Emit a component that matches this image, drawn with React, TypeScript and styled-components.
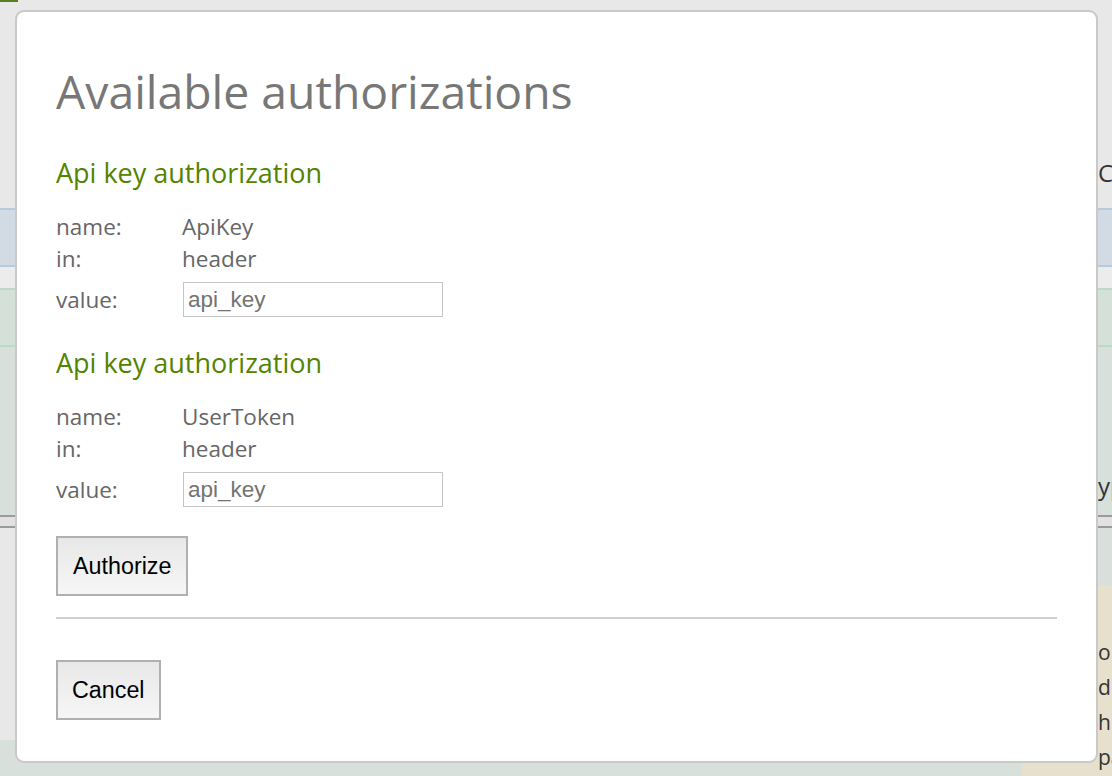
import styled, { createGlobalStyle } from 'styled-components';

const GlobalStyle = createGlobalStyle`
	html, body {
		margin: 0;
		padding: 0;
		width: 1112px;
		height: 776px;
		overflow: hidden;
		background: #e8e8e8;
	}
	* {
		box-sizing: border-box;
	}
`;

const Page = styled.div`
	position: relative;
	width: 1112px;
	height: 776px;
	display: flex;
	flex-direction: column;
	font-family: 'Open Sans', 'Noto Sans', sans-serif;
	color: #333;
	overflow: hidden;
`;

const TopBar = styled.div`
	height: 208px;
	background: #e8e8e8;
	position: relative;
	display: flex;
	justify-content: flex-end;
	align-items: flex-end;
	padding: 0 0 20px 0;
	&::before {
		content: '';
		position: absolute;
		left: 0;
		top: 0;
		width: 18px;
		height: 2px;
		background: #5a7f1e;
	}
`;

const Band = styled.div<{ $h: number; $bg: string; $line?: string }>`
	height: ${p => p.$h}px;
	background: ${p => p.$bg};
	border-top: ${p => (p.$line ? `2px solid ${p.$line}` : 'none')};
	border-bottom: ${p => (p.$line ? `2px solid ${p.$line}` : 'none')};
	display: flex;
	flex-direction: column;
	align-items: flex-end;
	justify-content: flex-end;
`;

const EdgeText = styled.span<{ $below?: number }>`
	font-size: 24px;
	line-height: 30px;
	color: #333;
	width: 14px;
	margin-bottom: ${p => p.$below ?? 0}px;
	overflow: hidden;
	white-space: nowrap;
`;

const BottomRow = styled.div`
	flex: 1;
	display: flex;
`;

const BottomLeft = styled.div`
	flex: 1;
	display: flex;
	flex-direction: column;
`;

const BottomRight = styled.div`
	width: 90px;
	display: flex;
	flex-direction: column;
`;

const DocText = styled.div`
	flex: 1;
	background: #e6e0cc;
	padding: 50px 0 0 76px;
	font-size: 21px;
	line-height: 35px;
	color: #333;
	white-space: nowrap;
	overflow: hidden;
`;

const Modal = styled.div`
	position: absolute;
	left: 15px;
	top: 10px;
	width: 1083px;
	height: 753px;
	background: #ffffff;
	border: 2px solid #c9c9c9;
	border-radius: 9px;
	padding: 50px 39px 0 39px;
	font-family: 'Open Sans', 'Noto Sans', sans-serif;
`;

const Title = styled.h3`
	margin: 0 0 34px 0;
	font-size: 46.3px;
	line-height: 60px;
	font-weight: 400;
	color: #777777;
`;

const AuthHeading = styled.h4`
	margin: 0 0 21px 0;
	font-size: 27px;
	line-height: 34px;
	font-weight: 400;
	color: #548300;
`;

const Section = styled.div`
	margin-bottom: 29px;
`;

const Fields = styled.div`
	display: grid;
	grid-template-columns: 126px 1fr;
	align-items: center;
	font-size: 22.5px;
	line-height: 32px;
	color: #666666;
`;

const ValueCell = styled.div`
	margin-top: 7px;
	display: flex;
`;

const LabelCell = styled.div<{ $input?: boolean }>`
	margin-top: ${p => (p.$input ? '7px' : '0')};
`;

const KeyInput = styled.input`
	width: 260px;
	height: 35px;
	margin: 0 0 0 1px;
	border: 1px solid #c4c4c4;
	padding: 0 4px;
	font-family: 'Liberation Sans', Arial, sans-serif;
	font-size: 22.5px;
	color: #666;
	outline: none;
	&::placeholder {
		color: #737373;
	}
`;

const Button = styled.button`
	display: block;
	height: 60px;
	margin: 0;
	padding: 0 15px;
	border: 2px solid #b0b0b0;
	border-radius: 0;
	background: linear-gradient(#e8e8e8, #f6f6f6);
	font-family: 'Liberation Sans', Arial, sans-serif;
	font-size: 23.3px;
	color: #000;
`;

const AuthorizeButton = styled(Button)`
	margin-top: 9px;
`;

const CancelButton = styled(Button)`
	padding: 0 14px;
`;

const Divider = styled.hr`
	margin: 21px 0 41px 0;
	border: none;
	border-top: 2px solid #d0d0d0;
`;

const auths = [
	{ name: 'ApiKey', in: 'header' },
	{ name: 'UserToken', in: 'header' },
];

export default function App() {
	return (
		<>
			<GlobalStyle />
			<Page>
				<TopBar>
					<EdgeText>C</EdgeText>
				</TopBar>
				<Band $h={59} $bg='#d2dbe4' $line='#b8cbdc' />
				<Band $h={21} $bg='#ececec' />
				<Band $h={59} $bg='#d5e0d9' $line='#bcd8cb' />
				<Band $h={168} $bg='#d7e0db'>
					<EdgeText $below={14}>yp</EdgeText>
				</Band>
				<Band $h={13} $bg='#e2e2e2' $line='#9a9a9a' />
				<BottomRow>
					<BottomLeft>
						<Band $h={212} $bg='#e8e8e8' />
						<Band $h={36} $bg='#d8e0dc' />
					</BottomLeft>
					<BottomRight>
						<Band $h={57} $bg='#d9e0dc' />
						<DocText>
							o<br />d<br />h<br />pa
						</DocText>
					</BottomRight>
				</BottomRow>

				<Modal>
					<Title>Available authorizations</Title>
					{auths.map(a => (
						<Section key={a.name}>
							<AuthHeading>Api key authorization</AuthHeading>
							<Fields>
								<LabelCell>name:</LabelCell>
								<div>{a.name}</div>
								<LabelCell>in:</LabelCell>
								<div>{a.in}</div>
								<LabelCell $input>value:</LabelCell>
								<ValueCell>
									<KeyInput placeholder='api_key' />
								</ValueCell>
							</Fields>
						</Section>
					))}
					<AuthorizeButton>Authorize</AuthorizeButton>
					<Divider />
					<CancelButton>Cancel</CancelButton>
				</Modal>
			</Page>
		</>
	);
}
